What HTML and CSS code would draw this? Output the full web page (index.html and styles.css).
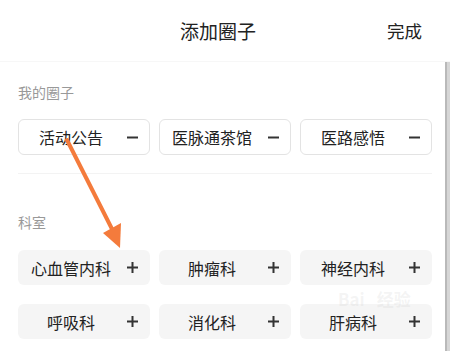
FILE: index.html
```html
<!DOCTYPE html>
<html lang="zh-CN">
<head>
  <meta charset="UTF-8" />
  <meta name="viewport" content="width=device-width, initial-scale=1.0"/>
  <title>添加圈子</title>
  <link rel="stylesheet" href="styles.css">
</head>
<body>
  <div class="page">
    <div class="header">
      <h2 class="title">添加圈子</h2>
      <span class="done">完成</span>
    </div>

    <div class="content">
      <div class="section-label">我的圈子</div>
      <div class="chip-grid">
        <div class="chip mine"><span>活动公告</span><svg class="icon" viewBox="0 0 11 11"><path d="M0 5.5h11"/></svg></div>
        <div class="chip mine"><span>医脉通茶馆</span><svg class="icon" viewBox="0 0 11 11"><path d="M0 5.5h11"/></svg></div>
        <div class="chip mine"><span>医路感悟</span><svg class="icon" viewBox="0 0 11 11"><path d="M0 5.5h11"/></svg></div>
      </div>

      <div class="divider"></div>

      <div class="section-label dept">科室</div>
      <div class="chip-grid">
        <div class="chip"><span>心血管内科</span><svg class="icon" viewBox="0 0 11 11"><path d="M0 5.5h11M5.5 0v11"/></svg></div>
        <div class="chip"><span>肿瘤科</span><svg class="icon" viewBox="0 0 11 11"><path d="M0 5.5h11M5.5 0v11"/></svg></div>
        <div class="chip"><span>神经内科</span><svg class="icon" viewBox="0 0 11 11"><path d="M0 5.5h11M5.5 0v11"/></svg></div>
        <div class="chip"><span>呼吸科</span><svg class="icon" viewBox="0 0 11 11"><path d="M0 5.5h11M5.5 0v11"/></svg></div>
        <div class="chip"><span>消化科</span><svg class="icon" viewBox="0 0 11 11"><path d="M0 5.5h11M5.5 0v11"/></svg></div>
        <div class="chip"><span>肝病科</span><svg class="icon" viewBox="0 0 11 11"><path d="M0 5.5h11M5.5 0v11"/></svg></div>
      </div>
    </div>

    <div class="scrollbar"></div>

    <svg class="arrow" viewBox="0 0 450 351" width="450" height="351">
      <path d="M67 140L112 229" stroke="#f47b3c" stroke-width="4" stroke-linecap="round" fill="none"/>
      <polygon points="103,233 121,223 120,248" fill="#f47b3c"/>
    </svg>

    <div class="watermark">Bai<span>经验</span></div>
  </div>
</body>
</html>
```
FILE: styles.css
```css
body {
  margin: 0;
  font-family: "Noto Sans CJK SC", "Noto Sans", sans-serif;
  background: #fff;
  color: #222;
}
.page {
  position: relative;
  width: 450px;
  height: 351px;
  overflow: hidden;
}
.header {
  height: 62px;
  display: flex;
  align-items: center;
  justify-content: space-between;
  padding: 0 28px 0 180px;
  border-bottom: 1px solid #f7f7f7;
  box-sizing: border-box;
}
.title {
  margin: 0;
  font-size: 19px;
  font-weight: normal;
  line-height: 24px;
}
.done {
  font-size: 17.5px;
  line-height: 24px;
}
.content {
  padding: 20px 18px 0 18px;
}
.section-label {
  font-size: 14px;
  line-height: 20px;
  color: #999;
  margin-bottom: 17px;
}
.section-label.dept {
  margin-top: 38px;
  margin-bottom: 18px;
}
.chip-grid {
  display: grid;
  grid-template-columns: repeat(3, 132px);
  column-gap: 9px;
  row-gap: 19px;
}
.chip {
  height: 35px;
  display: grid;
  grid-template-columns: 1fr 11px;
  column-gap: 13px;
  align-items: center;
  padding: 0 12px 0 10px;
  background: #f5f5f5;
  border-radius: 6px;
  font-size: 16px;
  color: #222;
  box-sizing: border-box;
}
.chip span {
  text-align: center;
  white-space: nowrap;
}
.chip.mine {
  height: 36px;
  background: #fff;
  border: 1px solid #e3e3e3;
  padding: 0 11px 0 9px;
}
.icon {
  width: 11px;
  height: 11px;
  stroke: #333;
  stroke-width: 2;
  fill: none;
}
.divider {
  height: 1px;
  background: #f3f3f3;
  margin-top: 18px;
}
.scrollbar {
  position: absolute;
  top: 62px;
  right: 0;
  width: 6px;
  bottom: 0;
  background: linear-gradient(to right, #fff 0, #fff 1px, #b9b9b9 1px, #b9b9b9 3px, #d6d6d6 3px);
}
.arrow {
  position: absolute;
  top: 0;
  left: 0;
  pointer-events: none;
}
.watermark {
  position: absolute;
  left: 338px;
  top: 286px;
  font-size: 17px;
  color: rgba(200, 200, 200, 0.2);
  font-weight: bold;
}
.watermark span {
  margin-left: 12px;
}
```
